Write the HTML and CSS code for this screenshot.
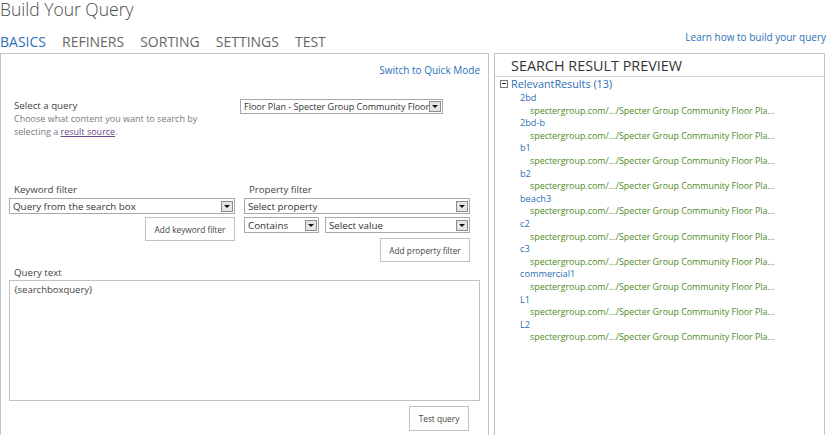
FILE: index.html
```html
<!DOCTYPE html>
<html>
<head>
<meta charset="utf-8">
<link rel="stylesheet" href="styles.css">
</head>
<body>
<div class="page">
  <h1 class="title">Build Your Query</h1>
  <div class="tabbar">
    <nav class="tabs">
      <span class="tab active">BASICS</span>
      <span class="tab">REFINERS</span>
      <span class="tab">SORTING</span>
      <span class="tab">SETTINGS</span>
      <span class="tab">TEST</span>
    </nav>
    <a class="learn">Learn how to build your query</a>
  </div>
  <div class="panels">
    <section class="left">
      <div class="switch-row"><a class="link">Switch to Quick Mode</a></div>
      <div class="query-row">
        <div class="query-desc">
          <div class="label">Select a query</div>
          <div class="hint">Choose what content you want to search by<br>selecting a <a class="src">result source</a>.</div>
        </div>
        <div class="select sel-query"><span class="val">Floor Plan - Specter Group Community Floor</span><span class="arrow"></span></div>
      </div>
      <div class="filters">
        <div class="fcol kw">
          <div class="label flabel">Keyword filter</div>
          <div class="select big"><span class="val">Query from the search box</span><span class="arrow"></span></div>
          <div class="btn-row"><span class="btn btn-kw">Add keyword filter</span></div>
        </div>
        <div class="fcol prop">
          <div class="label flabel">Property filter</div>
          <div class="select big"><span class="val">Select property</span><span class="arrow"></span></div>
          <div class="pair">
            <div class="select big contains"><span class="val">Contains</span><span class="arrow"></span></div>
            <div class="select big value"><span class="val">Select value</span><span class="arrow"></span></div>
          </div>
          <div class="btn-row"><span class="btn btn-prop">Add property filter</span></div>
        </div>
      </div>
      <div class="label qlabel">Query text</div>
      <div class="textarea">{searchboxquery}</div>
      <div class="btn-row test-row"><span class="btn btn-test">Test query</span></div>
    </section>
    <section class="right">
      <div class="rhead">SEARCH RESULT PREVIEW</div>
      <div class="group"><span class="minus"></span><span class="gname">RelevantResults (13)</span></div>
      <ul class="results">
        <li><div class="rt">2bd</div><div class="ru">spectergroup.com/.../Specter Group Community Floor Pla...</div></li>
        <li><div class="rt">2bd-b</div><div class="ru">spectergroup.com/.../Specter Group Community Floor Pla...</div></li>
        <li><div class="rt">b1</div><div class="ru">spectergroup.com/.../Specter Group Community Floor Pla...</div></li>
        <li><div class="rt">b2</div><div class="ru">spectergroup.com/.../Specter Group Community Floor Pla...</div></li>
        <li><div class="rt">beach3</div><div class="ru">spectergroup.com/.../Specter Group Community Floor Pla...</div></li>
        <li><div class="rt">c2</div><div class="ru">spectergroup.com/.../Specter Group Community Floor Pla...</div></li>
        <li><div class="rt">c3</div><div class="ru">spectergroup.com/.../Specter Group Community Floor Pla...</div></li>
        <li><div class="rt">commercial1</div><div class="ru">spectergroup.com/.../Specter Group Community Floor Pla...</div></li>
        <li><div class="rt">L1</div><div class="ru">spectergroup.com/.../Specter Group Community Floor Pla...</div></li>
        <li><div class="rt">L2</div><div class="ru">spectergroup.com/.../Specter Group Community Floor Pla...</div></li>
      </ul>
    </section>
  </div>
</div>
</body>
</html>
```

FILE: styles.css
```css
* { box-sizing: border-box; }
html, body { margin: 0; padding: 0; background: #fff; }
body {
  width: 826px; height: 435px; overflow: hidden;
  font-family: "Open Sans", "Noto Sans", sans-serif;
  color: #444;
}
.page { display: flex; flex-direction: column; }
.title {
  margin: 0;
  font-size: 17.5px; font-weight: 300; line-height: 18px;
  color: #4a4a4a;
}
.tabbar {
  display: flex; justify-content: space-between; align-items: flex-end;
  margin-top: 9px; height: 24px;
}
.tabs { display: flex; gap: 16px; }
.tab { font-size: 14px; line-height: 18px; color: #666; }
.tab.active { color: #2a72b8; }
.learn { font-size: 10px; color: #2a6fb5; line-height: 18px; margin-bottom: 5px; }
.panels { display: flex; gap: 5px; margin-top: 2px; }
.left {
  width: 489px; height: 400px;
  border: 1px solid #c4c4c4; border-bottom: none;
  padding: 0 8px 0 8px;
  display: flex; flex-direction: column;
}
.right {
  flex: 1; height: 400px; margin-right: 1px;
  border: 1px solid #c4c4c4; border-bottom: none;
}
.link { color: #2a6fb5; }
.switch-row { text-align: right; font-size: 10px; margin-top: 9px; line-height: 14px; }
.label { font-size: 9.7px; color: #444; line-height: 13px; }
.query-row { display: flex; margin-top: 22px; }
.query-desc { width: 230px; padding-left: 5px; }
.hint { font-size: 9px; color: #7a7a7a; line-height: 13px; }
.src { color: #6a4a8a; text-decoration: underline; }
.select {
  display: flex; align-items: center; justify-content: space-between;
  border: 1px solid #a9a9a9; background: #fff;
  height: 15px; padding: 0 1px 0 3px;
  font-size: 9px; color: #333; line-height: 13px;
}
.val { white-space: nowrap; overflow: hidden; }
.arrow {
  width: 12px; height: 11px; flex: none;
  border: 1px solid #8c8c8c; background: #e4e4e4;
  display: flex; align-items: center; justify-content: center;
}
.arrow::after {
  content: ""; border-left: 3px solid transparent; border-right: 3px solid transparent;
  border-top: 3px solid #111;
}
.sel-query { width: 203px; margin-left: 1px; }
.select.big { height: 16px; font-size: 9.8px; }
.filters { display: flex; gap: 9px; margin-top: 45px; }
.fcol { display: flex; flex-direction: column; }
.kw { width: 226px; }
.prop { width: 226px; }
.flabel { padding-left: 5px; margin-bottom: 2px; }
.btn-row { display: flex; justify-content: flex-end; }
.btn {
  display: flex; align-items: center; justify-content: center;
  border: 1px solid #c2c2c2; background: #fff;
  font-size: 8.3px; color: #444;
}
.btn-kw { width: 90px; height: 24px; margin-top: 3px; }
.pair { display: flex; gap: 6px; margin-top: 3px; }
.contains { width: 75px; }
.value { flex: 1; }
.btn-prop { width: 90px; height: 24px; margin-top: 5px; }
.qlabel { padding-left: 5px; margin-top: 4px; }
.textarea {
  margin-top: 1px; height: 121px; width: 471px;
  border: 1px solid #c2c2c2; padding: 2px 4px;
  font-size: 9.5px; color: #444; line-height: 14px;
}
.test-row { padding-right: 11px; }
.btn-test { width: 60px; height: 25px; margin-top: 5px; }
.rhead {
  font-size: 14.4px; line-height: 20px; color: #333;
  padding: 2px 0 0 16px; height: 23px;
  border-bottom: 1px solid #d4d4d4;
}
.group { display: flex; align-items: center; gap: 3px; padding-left: 5px; height: 14px; }
.minus {
  width: 8px; height: 8px; border: 1px solid #777; position: relative; flex: none;
}
.minus::after { content: ""; position: absolute; left: 1px; right: 1px; top: 2px; height: 1px; background: #333; }
.gname { font-size: 10.8px; color: #2a6fb5; line-height: 14px; }
.results { list-style: none; margin: 1px 0 0 0; padding: 0 0 0 25px; }
.rt { font-size: 9.2px; color: #2a6fb5; line-height: 12.6px; }
.ru { font-size: 8.9px; color: #4f8a1d; line-height: 12.6px; padding-left: 10px; white-space: nowrap; }
```
